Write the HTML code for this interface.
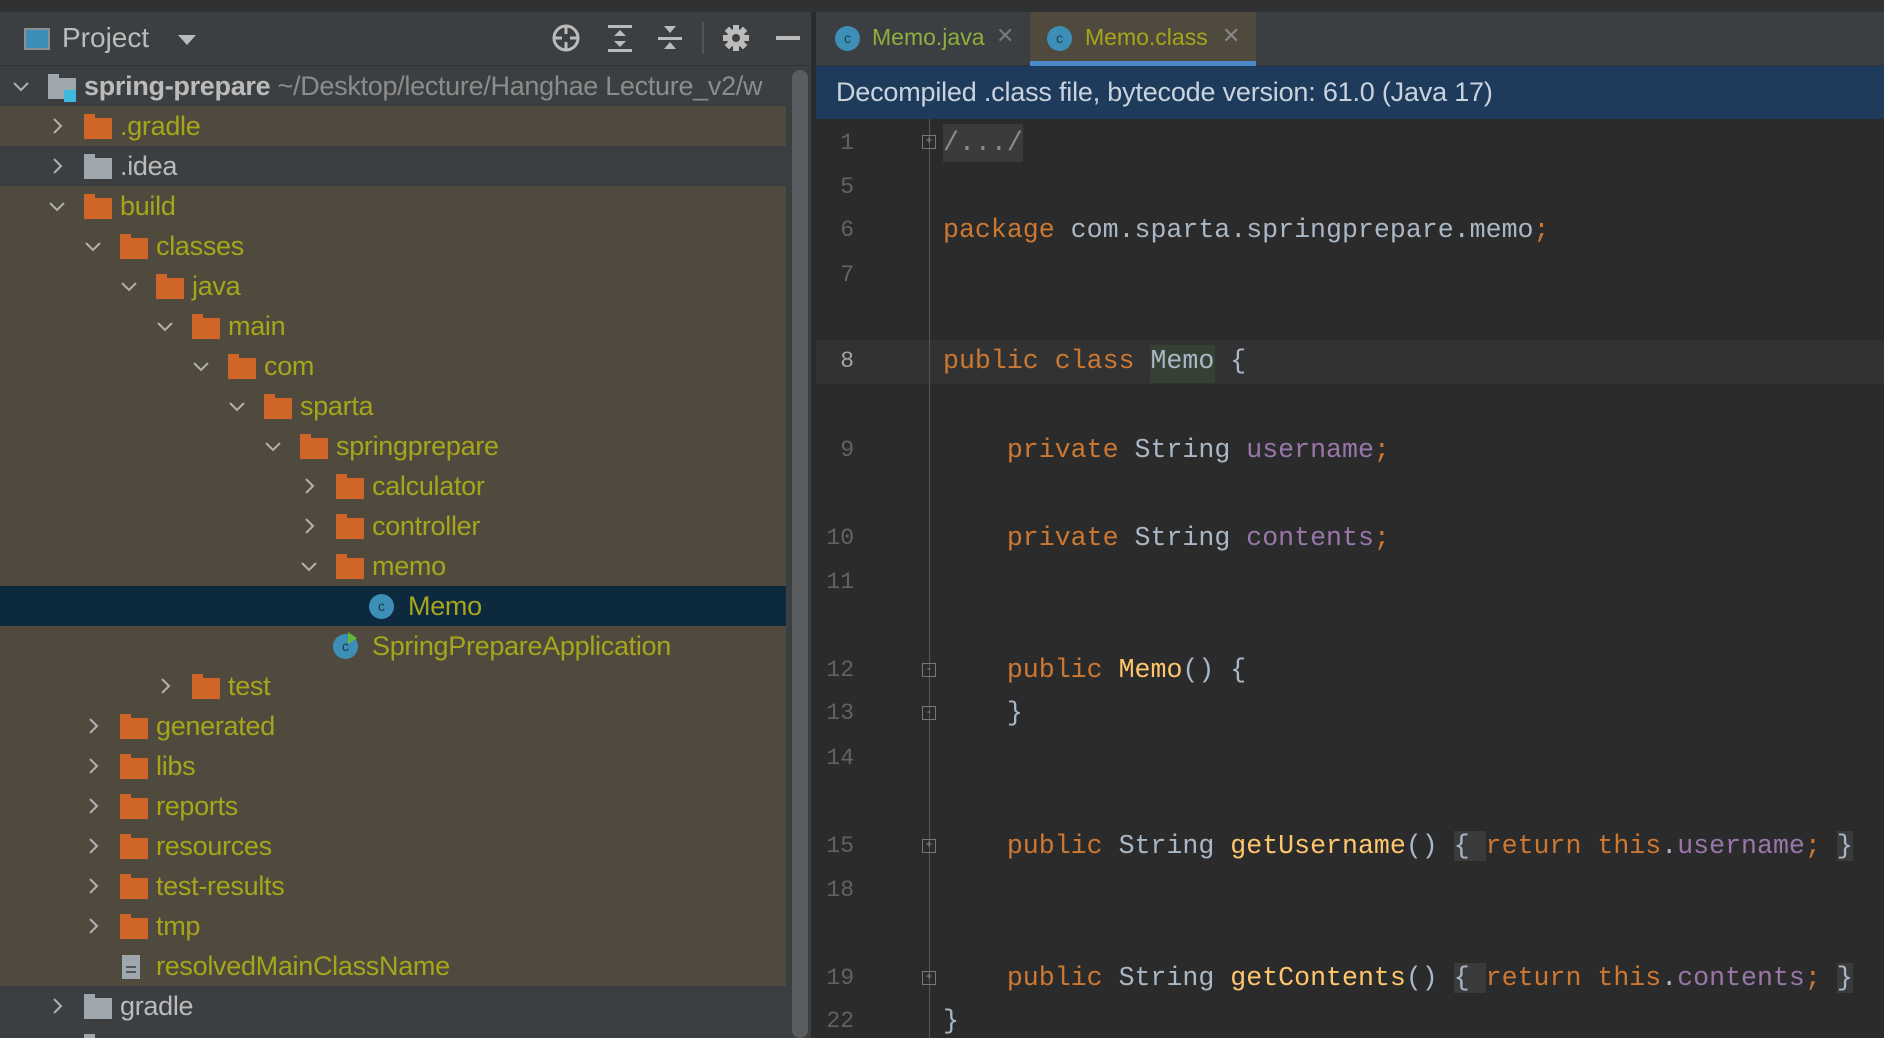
<!DOCTYPE html>
<html><head><meta charset="utf-8"><style>
*{margin:0;padding:0;box-sizing:border-box}
html,body{width:1884px;height:1038px;overflow:hidden}
body{background:#2b2b2b;position:relative;font-family:"Liberation Sans",sans-serif}
.a{position:absolute}
.row{position:absolute;left:0;width:786px;height:40px}
.t{position:absolute;top:6px;font-size:27px;color:#a7a51c;white-space:nowrap;line-height:28px;letter-spacing:-0.3px}
.fold{position:absolute;top:12px;width:28px;height:21px;background:#d0652a}
.fold:before{content:"";position:absolute;left:0;top:-4px;width:11px;height:5px;background:#d0652a}
.gf,.gf:before{background:#9ea7ad}
.chev{position:absolute;top:11px;width:18px;height:18px}
.cls{position:absolute;top:8px;width:25px;height:25px;border-radius:50%;background:#3d8fb8;color:#1c3a4a;font-size:14px;text-align:center;line-height:25px}
.code{position:absolute;left:943px;font-family:"Liberation Mono",monospace;font-size:26.6px;color:#a9b7c6;white-space:pre;line-height:30px}
.ln{position:absolute;left:816px;width:38px;text-align:right;font-family:"Liberation Mono",monospace;font-size:23px;color:#606366;line-height:30px}
.k{color:#cc7832}.f{color:#9876aa}.m{color:#ffc66d}
.bx{background:#3b3b3b}
.fm{position:absolute;left:922px;width:14px;height:14px;border:1px solid #777;color:#888;font-size:12px;line-height:11px;text-align:center;font-family:"Liberation Mono",monospace}
</style></head><body>
<div class="a" style="left:0;top:0;width:1884px;height:12px;background:#2f3133"></div>
<div class="a" style="left:0;top:12px;width:812px;height:54px;background:#3c3f41;border-bottom:1px solid #323232"></div>
<div class="a" style="left:24px;top:28px;width:26px;height:22px;border:2px solid #8c9093;background:#3d8fb8"></div>
<div class="a" style="left:62px;top:22px;font-size:28px;color:#bbbbbb">Project</div>
<div class="a" style="left:178px;top:35px;width:0;height:0;border-left:9px solid transparent;border-right:9px solid transparent;border-top:10px solid #bbb"></div>
<svg class="a" style="left:548px;top:22px" width="260" height="32" viewBox="0 0 260 32">
<g fill="none" stroke="#bbb" stroke-width="3"><circle cx="18" cy="16" r="12"/><line x1="18" y1="4" x2="18" y2="12"/><line x1="18" y1="20" x2="18" y2="28"/><line x1="6" y1="16" x2="14" y2="16"/><line x1="22" y1="16" x2="30" y2="16"/></g>
<g fill="#bbb"><rect x="60" y="3" width="24" height="3"/><rect x="60" y="27" width="24" height="3"/><path d="M66 14 L72 8 L78 14Z M66 19 L72 25 L78 19Z"/>
<rect x="110" y="15" width="24" height="3"/><path d="M116 4 L122 11 L128 4Z M116 27 L122 20 L128 27Z"/>
<rect x="154" y="0" width="2" height="32" fill="#555"/>
<circle cx="188" cy="16" r="9"/><rect x="185" y="3" width="6" height="26"/><rect x="175" y="13" width="26" height="6"/><rect x="185" y="3" width="6" height="26" transform="rotate(45 188 16)"/><rect x="185" y="3" width="6" height="26" transform="rotate(-45 188 16)"/>
<rect x="228" y="14" width="24" height="4"/></g>
<circle cx="188" cy="16" r="4" fill="#3c3f41"/>
</svg>
<div class="a" style="left:0;top:66px;width:812px;height:972px;background:#3c3f41"></div>
<div class="a" style="left:0;top:106px;width:786px;height:40px;background:#4f4a3d"></div>
<div class="a" style="left:0;top:186px;width:786px;height:800px;background:#4f4a3d"></div>
<div class="a" style="left:0;top:586px;width:786px;height:40px;background:#0d293e"></div>
<div class="a" style="left:792px;top:70px;width:16px;height:968px;background:#5a5d5f;border-radius:8px"></div>
<div class="a" style="left:811px;top:12px;width:5px;height:1026px;background:#2b2b2b"></div>

<div id="tree"></div>
<script>
var rows=[["spring-prepare",0,"e","p"],[".gradle",1,"c"],[".idea",1,"c","g"],["build",1,"e"],["classes",2,"e"],["java",3,"e"],["main",4,"e"],["com",5,"e"],["sparta",6,"e"],["springprepare",7,"e"],["calculator",8,"c"],["controller",8,"c"],["memo",8,"e"],["Memo",9,"n","c"],["SpringPrepareApplication",8,"n","c"],["test",4,"c"],["generated",2,"c"],["libs",2,"c"],["reports",2,"c"],["resources",2,"c"],["test-results",2,"c"],["tmp",2,"c"],["resolvedMainClassName",2,"n","f"],["gradle",1,"c","g"],["",1,"n","g"]];
var h="";
rows.forEach(function(r,i){
 var y=66+i*40,L=r[1],cx=12+36*L,ix=48+36*L,tx=84+36*L;
 h+='<div class="row" style="top:'+y+'px">';
 if(r[2]=="e")h+='<svg class="chev" style="left:'+cx+'px" viewBox="0 0 18 18"><path d="M2 6 L9 13 L16 6" fill="none" stroke="#b0b0b0" stroke-width="2"/></svg>';
 if(r[2]=="c")h+='<svg class="chev" style="left:'+cx+'px" viewBox="0 0 18 18"><path d="M6 2 L13 9 L6 16" fill="none" stroke="#b0b0b0" stroke-width="2"/></svg>';
 var col="#a7a51c";
 if(r[3]=="p"){h+='<div class="fold gf" style="left:'+ix+'px"></div><div class="a" style="left:'+(ix+16)+'px;top:24px;width:12px;height:12px;background:#3fb8e0"></div>';col="#bbbbbb";}
 else if(r[3]=="g"){h+='<div class="fold gf" style="left:'+ix+'px"></div>';col="#bbbbbb";}
 else if(r[3]=="c"){h+='<div class="cls" style="left:'+(ix-3)+'px">c</div>';if(i==14)h+='<div class="a" style="left:'+(ix+12)+'px;top:6px;width:0;height:0;border-top:6px solid transparent;border-bottom:6px solid transparent;border-left:9px solid #5fb83a"></div>';}
 else if(r[3]=="f"){h+='<div class="a" style="left:'+(ix+2)+'px;top:9px;width:18px;height:24px;background:#9ea7ad"></div><div class="a" style="left:'+(ix+6)+'px;top:20px;width:10px;height:2px;background:#555;box-shadow:0 5px 0 #555"></div>';}
 else h+='<div class="fold" style="left:'+ix+'px"></div>';
 if(i==0)h+='<div class="t" style="left:'+tx+'px;color:#bbb;font-weight:bold">spring-prepare <span style="font-weight:normal;color:#8c8c8c">~/Desktop/lecture/Hanghae Lecture_v2/w</span></div>';
 else h+='<div class="t" style="left:'+tx+'px;color:'+col+'">'+r[0]+'</div>';
 h+='</div>';
});
document.getElementById("tree").innerHTML=h;
</script>

<div class="a" style="left:816px;top:12px;width:1068px;height:54px;background:#3c3f41;border-bottom:1px solid #323232"></div>
<div class="a" style="left:1030px;top:12px;width:226px;height:54px;background:#4f4a3d;border-bottom:5px solid #4a88c7"></div>
<div class="cls" style="left:835px;top:26px">c</div>
<div class="a" style="left:872px;top:24px;font-size:23px;color:#8fae3e">Memo.java</div>
<div class="a" style="left:996px;top:23px;font-size:22px;color:#777">✕</div>
<div class="cls" style="left:1047px;top:26px">c</div>
<div class="a" style="left:1085px;top:24px;font-size:23px;color:#a7a51c">Memo.class</div>
<div class="a" style="left:1222px;top:23px;font-size:22px;color:#888">✕</div>
<div class="a" style="left:816px;top:66px;width:1068px;height:53px;background:#1f3b5b"></div>
<div class="a" style="left:836px;top:77px;font-size:27px;color:#c9d3de;letter-spacing:-0.2px">Decompiled .class file, bytecode version: 61.0 (Java 17)</div>
<div class="a" style="left:816px;top:340px;width:1068px;height:44px;background:#323232"></div>
<div class="a" style="left:929px;top:119px;width:1px;height:919px;background:#555"></div>
<div class="a" style="left:943px;top:124px;width:80px;height:38px;background:#3b3b3b"></div>
<div class="a" style="left:1150px;top:345px;width:65px;height:38px;background:#344134"></div>

<div class="ln" style="top:128px">1</div><div class="ln" style="top:172px">5</div><div class="ln" style="top:215px">6</div><div class="ln" style="top:260px">7</div>
<div class="ln" style="top:346px;color:#a4a3a3">8</div><div class="ln" style="top:435px">9</div><div class="ln" style="top:523px">10</div><div class="ln" style="top:567px">11</div>
<div class="ln" style="top:655px">12</div><div class="ln" style="top:698px">13</div><div class="ln" style="top:743px">14</div><div class="ln" style="top:831px">15</div>
<div class="ln" style="top:875px">18</div><div class="ln" style="top:963px">19</div><div class="ln" style="top:1006px">22</div>

<div class="fm" style="top:135px">+</div>
<div class="fm" style="top:663px">-</div>
<div class="fm" style="top:706px">-</div>
<div class="fm" style="top:839px">+</div>
<div class="fm" style="top:971px">+</div>

<div class="code" style="top:128px;color:#8c8c8c">/.../</div>
<div class="code" style="top:215px"><span class="k">package</span> com.sparta.springprepare.memo<span class="k">;</span></div>
<div class="code" style="top:346px"><span class="k">public class</span> Memo {</div>
<div class="code" style="top:435px">    <span class="k">private</span> String <span class="f">username</span><span class="k">;</span></div>
<div class="code" style="top:523px">    <span class="k">private</span> String <span class="f">contents</span><span class="k">;</span></div>
<div class="code" style="top:655px">    <span class="k">public</span> <span class="m">Memo</span>() {</div>
<div class="code" style="top:698px">    }</div>
<div class="code" style="top:831px">    <span class="k">public</span> String <span class="m">getUsername</span>() <span class="bx">{ </span><span class="k">return this</span>.<span class="f">username</span><span class="k">;</span> <span class="bx">}</span></div>
<div class="code" style="top:963px">    <span class="k">public</span> String <span class="m">getContents</span>() <span class="bx">{ </span><span class="k">return this</span>.<span class="f">contents</span><span class="k">;</span> <span class="bx">}</span></div>
<div class="code" style="top:1006px">}</div>
</body></html>
